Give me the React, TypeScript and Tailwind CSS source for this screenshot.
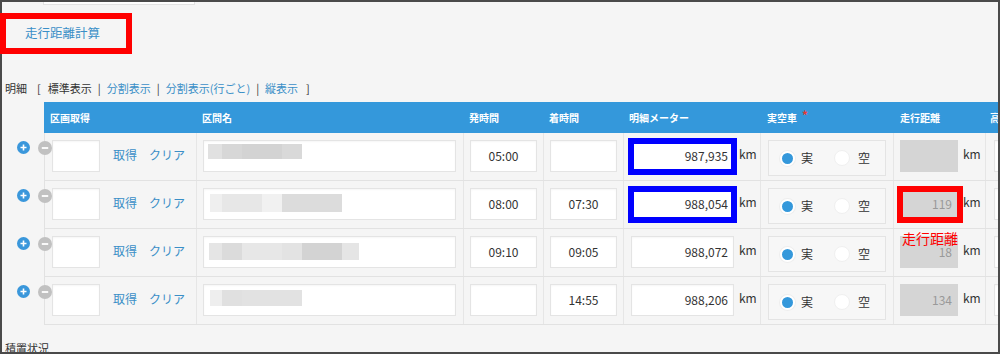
import React from 'react'

type Block = { w: number; c: string }

type Row = {
  dep: string
  arr: string
  meter: string
  dist: string
  blur: Block[]
  blurClass: string
  markMeter?: boolean
  markDist?: boolean
}

const ROWS: Row[] = [
  {
    dep: '05:00',
    arr: '',
    meter: '987,935',
    dist: '',
    blurClass: 'ml-[4px] mt-[3px] h-[15px]',
    blur: [
      { w: 14, c: '#e1e1e1' },
      { w: 20, c: '#d7d7d7' },
      { w: 40, c: '#d3d3d3' },
      { w: 20, c: '#d9d9d9' },
    ],
    markMeter: true,
  },
  {
    dep: '08:00',
    arr: '07:30',
    meter: '988,054',
    dist: '119',
    blurClass: 'ml-[6px] mt-[5px] h-[18px]',
    blur: [
      { w: 12, c: '#efefef' },
      { w: 40, c: '#e7e7e7' },
      { w: 20, c: '#f1f1f1' },
      { w: 60, c: '#dcdcdc' },
    ],
    markMeter: true,
    markDist: true,
  },
  {
    dep: '09:10',
    arr: '09:05',
    meter: '988,072',
    dist: '18',
    blurClass: 'ml-[5px] mt-[6px] h-[17px]',
    blur: [
      { w: 13, c: '#e5e5e5' },
      { w: 20, c: '#dbdbdb' },
      { w: 40, c: '#e7e7e7' },
      { w: 20, c: '#e3e3e3' },
      { w: 40, c: '#d3d3d3' },
      { w: 17, c: '#e5e5e5' },
    ],
  },
  {
    dep: '',
    arr: '14:55',
    meter: '988,206',
    dist: '134',
    blurClass: 'ml-[6px] mt-[5px] h-[16px]',
    blur: [
      { w: 12, c: '#eeeeee' },
      { w: 20, c: '#e0e0e0' },
      { w: 60, c: '#e2e2e2' },
    ],
  },
]

const box = 'h-[32px] shrink-0 border border-[#e4e4e4] bg-white shadow-[inset_0_1px_2px_rgba(0,0,0,0.04)]'
const cell = 'flex shrink-0 items-start border-r border-[#e6e6e6] pt-[7px]'

function PlusIcon() {
  return (
    <svg width="13" height="13" viewBox="0 0 13 13">
      <circle cx="6.5" cy="6.5" r="6.5" fill="#3a97db" />
      <path d="M6.5 3.5v6M3.5 6.5h6" stroke="#fff" strokeWidth="1.6" />
    </svg>
  )
}

function MinusIcon() {
  return (
    <svg width="14" height="14" viewBox="0 0 14 14">
      <circle cx="7" cy="7" r="7" fill="#c1c1c1" />
      <path d="M3.8 7h6.4" stroke="#fff" strokeWidth="1.8" />
    </svg>
  )
}

function DetailRow({ row }: { row: Row }) {
  return (
    <div className="relative flex h-[48px]">
      <div className="w-[44px] shrink-0 pl-[17px] pt-[8px]">
        <PlusIcon />
      </div>
      <div className="absolute left-[38px] top-[8px] z-[5] flex">
        <MinusIcon />
      </div>
      <div className="flex flex-1 border-b border-l border-[#e2e2e2]">
        {/* 区画取得 */}
        <div className={`${cell} w-[152px] pl-[7px]`}>
          <div className={`${box} w-[48px]`} />
          <span className="ml-[13px] leading-[30px] text-[#3a8fc7]">取得</span>
          <span className="ml-[12px] leading-[30px] text-[#3a8fc7]">クリア</span>
        </div>
        {/* 区間名 */}
        <div className={`${cell} w-[267px] pl-[6px]`}>
          <div className={`${box} w-[253px]`}>
            <div className={`flex ${row.blurClass}`}>
              {row.blur.map((b, i) => (
                <div key={i} className="h-full" style={{ width: b.w, background: b.c }} />
              ))}
            </div>
          </div>
        </div>
        {/* 発時間 */}
        <div className={`${cell} w-[80px] pl-[6px]`}>
          <div className={`${box} w-[67px] text-center leading-[30px]`}>{row.dep}</div>
        </div>
        {/* 着時間 */}
        <div className={`${cell} w-[80px] pl-[6px]`}>
          <div className={`${box} w-[67px] text-center leading-[30px]`}>{row.arr}</div>
        </div>
        {/* 明細メーター */}
        <div className={`${cell} w-[137px] pl-[7px]`}>
          <div className={`relative ${box} w-[103px] pr-[5px] text-right leading-[30px]`}>
            {row.meter}
            {row.markMeter && (
              <div className="absolute -bottom-[4px] -left-[4px] -right-[4px] -top-[3px] border-[6px] border-[#0000ff]" />
            )}
          </div>
          <span className="ml-[5px] leading-[28px]">km</span>
        </div>
        {/* 実空車 */}
        <div className={`${cell} w-[133px] pl-[7px]`}>
          <div className="flex h-[36px] w-[118px] items-center border border-[#e4e4e4] bg-[#f7f7f7] pl-[11px]">
            <div className="h-[15px] w-[15px] rounded-full border-[2px] border-white bg-[#3498db] shadow-[0_0_0_1px_#eee]" />
            <span className="ml-[6px]">実</span>
            <div className="ml-[21px] h-[16px] w-[16px] rounded-full border border-[#f0f0f0] bg-white" />
            <span className="ml-[8px]">空</span>
          </div>
        </div>
        {/* 走行距離 */}
        <div className={`${cell} w-[92px] pl-[6px]`}>
          <div className="relative h-[32px] w-[58px] shrink-0 bg-[#d5d5d5] pr-[6px] text-right leading-[32px] text-[#999]">
            {row.dist}
            {row.markDist && (
              <>
                <div className="absolute -bottom-[3px] -left-[3px] -right-[5px] -top-[2px] border-[6px] border-[#ff0000]" />
                <div className="absolute left-[2px] top-[42px] z-10 whitespace-nowrap text-[14px] leading-[16px] text-[#ff0000]">
                  走行距離
                </div>
              </>
            )}
          </div>
          <span className="ml-[5px] leading-[28px]">km</span>
        </div>
        {/* 高 */}
        <div className="flex flex-1 items-start pl-[8px] pt-[7px]">
          <div className={`${box} w-[40px]`} />
        </div>
      </div>
    </div>
  )
}

export default function App() {
  return (
    <div className="relative h-[354px] w-[1000px] overflow-hidden bg-[#f5f5f5] font-['Noto_Sans_CJK_JP',sans-serif] text-[12px] text-[#333]">
      <div className="pointer-events-none absolute inset-0 z-20 border-2 border-[#4a4a4a]" />

      <div className="ml-[43px] h-[5px] w-[152px] border-x border-b border-[#e3e3e3] bg-white" />

      <div className="relative mt-[8px] flex h-[41px] w-[132px] items-center pl-[25px] text-[12.5px] text-[#3a8fc7]">
        走行距離計算
        <div className="absolute inset-0 z-30 border-[6px] border-[#ff0000]" />
      </div>

      <div className="mt-[26px] flex h-[16px] items-center gap-[6px] pl-[5px] text-[11px] leading-[16px]">
        <span>明細</span>
        <span className="ml-[4px]">[</span>
        <span className="ml-[1px]">標準表示</span>
        <span>|</span>
        <span className="text-[#3a8fc7]">分割表示</span>
        <span>|</span>
        <span className="text-[#3a8fc7]">分割表示(行ごと)</span>
        <span>|</span>
        <span className="text-[#3a8fc7]">縦表示</span>
        <span className="ml-[2px]">]</span>
      </div>

      <div className="ml-[44px] mt-[6px] flex h-[31px] items-center bg-[#3498db] text-[10px] font-bold text-white">
        <div className="w-[152px] shrink-0 pl-[6px]">区画取得</div>
        <div className="w-[267px] shrink-0 pl-[6px]">区間名</div>
        <div className="w-[80px] shrink-0 pl-[6px]">発時間</div>
        <div className="w-[80px] shrink-0 pl-[6px]">着時間</div>
        <div className="w-[137px] shrink-0 pl-[6px]">明細メーター</div>
        <div className="flex w-[133px] shrink-0 items-start pl-[7px]">
          実空車
          <span className="ml-[5px] text-[12px] leading-[10px] text-[#e53935]">*</span>
        </div>
        <div className="w-[92px] shrink-0 pl-[7px]">走行距離</div>
        <div className="flex-1 whitespace-nowrap pl-[5px]">高</div>
      </div>

      {ROWS.map((row, i) => (
        <DetailRow key={i} row={row} />
      ))}

      <div className="mt-[16px] pl-[5px] text-[11px] leading-[14px]">積置状況</div>
    </div>
  )
}
